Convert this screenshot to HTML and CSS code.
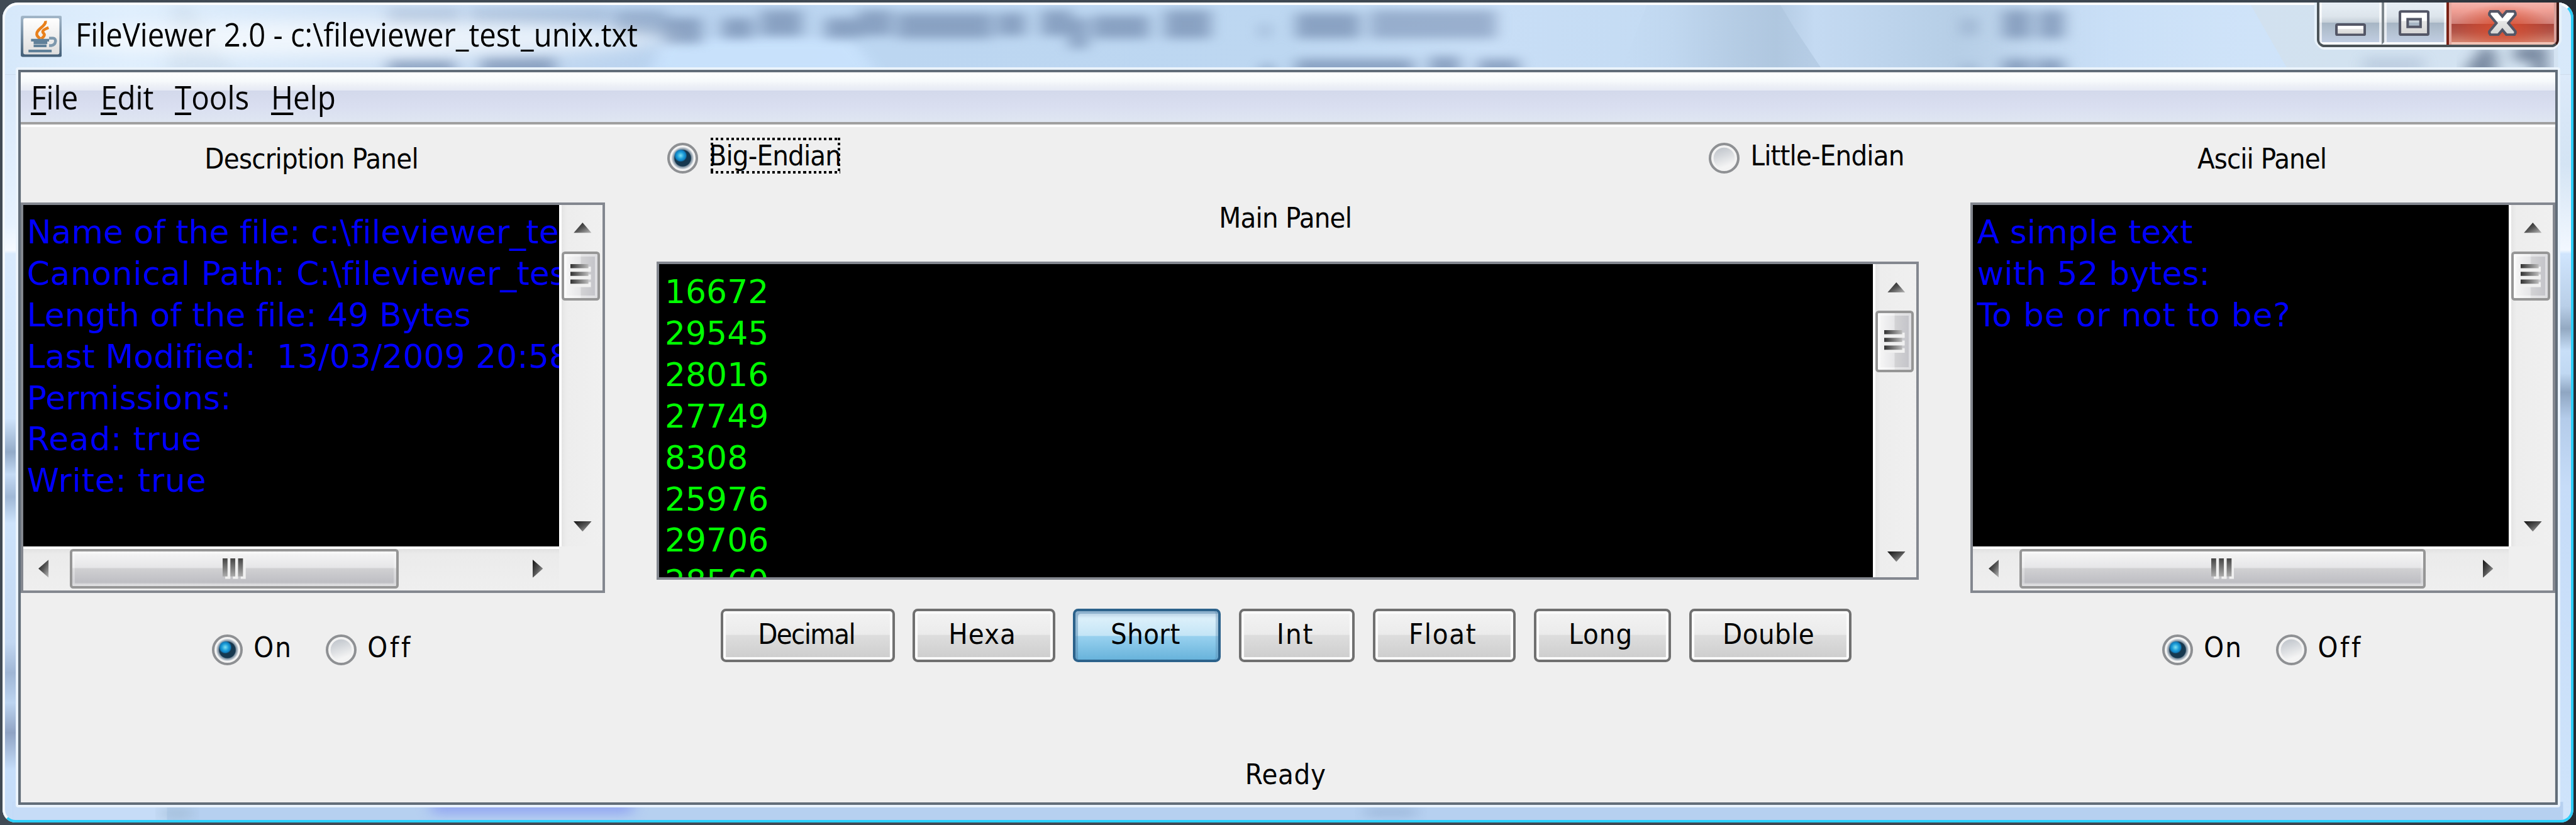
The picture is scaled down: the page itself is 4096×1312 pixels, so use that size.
FILE: index.html
```html
<!DOCTYPE html>
<html lang="en">
<head>
<meta charset="utf-8">
<title>FileViewer 2.0</title>
<link rel="stylesheet" href="styles.css">
</head>
<body>
<svg class="defs" width="0" height="0" aria-hidden="true">
  <defs>
    <linearGradient id="arrowFill" x1="0" y1="0" x2="1" y2="1"><stop offset="0" stop-color="#111"/><stop offset=".5" stop-color="#555"/><stop offset="1" stop-color="#bbb"/></linearGradient>
    <linearGradient id="gripH" x1="0" x2="1"><stop offset="0" stop-color="#333"/><stop offset="1" stop-color="#bbb"/></linearGradient>
    <linearGradient id="gripV" x1="0" y1="0" x2="0" y2="1"><stop offset="0" stop-color="#444"/><stop offset="1" stop-color="#aaa"/></linearGradient>
    <linearGradient id="glyphFill" x1="0" y1="0" x2="0" y2="1"><stop offset="0" stop-color="#fff"/><stop offset=".4" stop-color="#fff"/><stop offset=".42" stop-color="#e6e6e6"/><stop offset="1" stop-color="#d4d4d4"/></linearGradient>
    <symbol id="up" viewBox="0 0 7 4"><path d="M3.5 0 7 4H0z" fill="url(#arrowFill)"/></symbol>
    <symbol id="down" viewBox="0 0 7 4"><path d="M0 0h7L3.5 4z" fill="url(#arrowFill)"/></symbol>
    <symbol id="left" viewBox="0 0 4 7"><path d="M4 0v7L0 3.5z" fill="url(#arrowFill)"/></symbol>
    <symbol id="right" viewBox="0 0 4 7"><path d="M0 0v7l4-3.5z" fill="url(#arrowFill)"/></symbol>
    <symbol id="gripRows" viewBox="0 0 8 9"><path d="M0 1h8v2H0zM0 4h8v2H0zM0 7h8v2H0z" fill="#f0f0f0"/><path d="M0 0h7v1.600H0zM0 3h7v1.600H0zM0 6h7v1.600H0z" fill="url(#gripH)"/></symbol>
    <symbol id="gripCols" viewBox="0 0 9 8"><path d="M1 0h2v8H1zM4 0h2v8H4zM7 0h2v8H7z" fill="#f0f0f0"/><path d="M0 0h1.900v7H0zM3 0h1.900v7H3zM6 0h1.900v7H6z" fill="url(#gripV)"/></symbol>
  </defs>
</svg>

<div class="window">
  <svg class="glass" viewBox="0 0 1000 320" preserveAspectRatio="none" aria-hidden="true">
    <defs>
      <filter id="soft" x="-20%" y="-60%" width="140%" height="220%"><feGaussianBlur stdDeviation="2.8 1.8"/></filter>
      <filter id="wide" x="-20%" y="-60%" width="140%" height="220%"><feGaussianBlur stdDeviation="9 3"/></filter>
      <linearGradient id="sky" x1="0" x2="1">
        <stop offset="0" stop-color="#d6e8fa"/><stop offset=".05" stop-color="#e0effd"/><stop offset=".15" stop-color="#d0e2f6"/><stop offset=".25" stop-color="#b9d2ee"/><stop offset=".34" stop-color="#bcd6f1"/><stop offset=".5" stop-color="#bdd7f1"/><stop offset=".58" stop-color="#c8def6"/><stop offset=".65" stop-color="#c4dbf3"/><stop offset=".69" stop-color="#b4cbe3"/><stop offset=".705" stop-color="#c4daf2"/><stop offset=".76" stop-color="#b6cee6"/><stop offset=".82" stop-color="#c8def5"/><stop offset=".88" stop-color="#d4e5f5"/><stop offset="1" stop-color="#d8e9fa"/>
      </linearGradient>
      <linearGradient id="shade" x1="0" x2="1"><stop offset="0" stop-color="#a9c1da" stop-opacity="0"/><stop offset="1" stop-color="#a9c1da" stop-opacity=".55"/></linearGradient>
      <linearGradient id="fadeL" x1="0" x2="1"><stop offset="0" stop-color="#cce2fb" stop-opacity="0"/><stop offset="1" stop-color="#cce2fb" stop-opacity=".7"/></linearGradient>
      <linearGradient id="side" x1="0" y1="0" x2="0" y2="1">
        <stop offset="0" stop-color="#d8e8fa"/><stop offset=".2" stop-color="#e6f2fe"/><stop offset=".235" stop-color="#f6faff"/><stop offset=".24" stop-color="#d9eafd"/><stop offset=".46" stop-color="#cfe4fc"/><stop offset=".505" stop-color="#93abc8"/><stop offset=".535" stop-color="#c4daf4"/><stop offset=".565" stop-color="#a0b8d6"/><stop offset=".6" stop-color="#cde3fb"/><stop offset=".76" stop-color="#c2d7f1"/><stop offset=".8" stop-color="#9fb6d5"/><stop offset=".84" stop-color="#bcd4f0"/><stop offset=".88" stop-color="#8fa3c4"/><stop offset=".93" stop-color="#c6defa"/><stop offset="1" stop-color="#c6dcf7"/>
      </linearGradient>
      <linearGradient id="sideR" x1="0" y1="0" x2="0" y2="1">
        <stop offset="0" stop-color="#dceafa"/><stop offset=".12" stop-color="#d4e4f4"/><stop offset=".235" stop-color="#f2f8ff"/><stop offset=".24" stop-color="#d0e5fd"/><stop offset=".31" stop-color="#b9cfe8"/><stop offset=".34" stop-color="#93a9c2"/><stop offset=".37" stop-color="#c8dff8"/><stop offset=".4" stop-color="#c0d8f2"/><stop offset=".425" stop-color="#8fa6c2"/><stop offset=".46" stop-color="#b4ccea"/><stop offset=".55" stop-color="#c6dcf8"/><stop offset="1" stop-color="#cfe4fb"/>
      </linearGradient>
    </defs>
    <rect width="1000" height="28" fill="url(#sky)"/>
    <path d="M258 14h72l11 14h-90z" fill="#cbe4fe" opacity=".85" filter="url(#soft)"/>
    <path d="M640 0h51l6 10 12 18h-80z" fill="url(#shade)"/>
    <path d="M770 28h120L874 0h-104z" fill="url(#fadeL)"/>
    <path d="M874 0l16 28h104V0z" fill="#cfdeea" opacity=".5"/>
    <path d="M66 1h7l18 27H64z" fill="#c2d2e2" opacity=".35" filter="url(#soft)"/>
    <g fill="#7087ab" opacity=".66" filter="url(#soft)">
      <rect x="150" y="2" width="28" height="7" opacity=".4"/><rect x="182" y="2" width="54" height="7" opacity=".4"/><rect x="238" y="3" width="20" height="10" opacity=".7"/>
      <rect x="257" y="6" width="15" height="10"/><rect x="280" y="6" width="12" height="8"/><rect x="295" y="3" width="16" height="10"/><rect x="320" y="6" width="14" height="8"/><rect x="333" y="3" width="13" height="10"/><rect x="348" y="4" width="37" height="10"/><rect x="387" y="4" width="11" height="9"/>
      <rect x="404" y="3" width="12" height="10"/><rect x="415" y="6" width="7" height="12"/><rect x="424" y="5" width="22" height="9"/><rect x="452" y="3" width="18" height="11"/><rect x="489" y="8" width="4" height="6" opacity=".5"/>
      <rect x="503" y="4" width="25" height="10"/><rect x="532" y="3" width="49" height="11" opacity=".8"/>
      <rect x="150" y="22" width="26" height="9"/><rect x="186" y="21" width="29" height="10"/><rect x="490" y="24" width="4" height="6"/><rect x="503" y="22" width="46" height="9"/><rect x="555" y="21" width="12" height="10"/><rect x="574" y="22" width="16" height="9"/>
      <rect x="762" y="6" width="6" height="7" opacity=".5"/><rect x="778" y="3" width="11" height="11"/><rect x="792" y="3" width="10" height="11"/><rect x="778" y="22" width="11" height="9"/><rect x="791" y="22" width="11" height="9"/><rect x="762" y="24" width="6" height="5" opacity=".5"/>
      <rect x="918" y="21" width="24" height="8" opacity=".3"/>
    </g>
    <g fill="none" stroke="#5d6e88" stroke-width="6" opacity=".75" filter="url(#soft)"><path d="M968 18l-8 10M967 20v9"/><path d="M977 20h10v9"/></g>
    <ellipse cx="140" cy="14" rx="118" ry="7" fill="#fff" opacity=".6" filter="url(#wide)"/>
    <rect y="28" width="8" height="292" fill="url(#side)"/>
    <rect x="992" y="28" width="8" height="292" fill="url(#sideR)"/>
    <rect x="4" y="312" width="992" height="8" fill="#b6d0f0"/>
    <rect x="4" y="312" width="60" height="8" fill="#c6dcf7"/>
    <rect x="167" y="310" width="78" height="7" fill="#8d9ff2" opacity=".75" filter="url(#soft)"/>
    <rect x="62" y="314" width="12" height="5" fill="#9fb9d2" opacity=".6" filter="url(#soft)"/>
    <rect x="530" y="314" width="20" height="4" fill="#93aed2" opacity=".6" filter="url(#soft)"/>
  </svg>

  <header class="titlebar">
    <svg class="java" viewBox="0 0 16 16">
      <defs><linearGradient id="jb" x1="0" y1="0" x2="0" y2="1"><stop offset="0" stop-color="#a3b7c9"/><stop offset="1" stop-color="#435f78"/></linearGradient><linearGradient id="jf" x1="0" y1="0" x2="0" y2="1"><stop offset="0" stop-color="#fff"/><stop offset="1" stop-color="#dedede"/></linearGradient></defs>
      <rect width="16" height="16" rx=".8" fill="url(#jb)"/><rect x="1" y="1" width="14" height="14" rx=".6" fill="url(#jf)"/>
      <path d="M9.6 2C10 4 6 5.2 6.2 7.2 6.3 8.2 7.2 8.6 7.6 9M10.8 4.6C8.600 5.500 8 6 9 7 9.600 7.600 8.600 8.400 8 9" fill="none" stroke="#e8801c" stroke-width="1.1"/>
      <path d="M4 9h7v1H4zM5 10h5.300v1H5zM5 11.200h5v1H5zM3 13.200h9v1H3z" fill="#5f8099"/>
      <path d="M11 8.700h1.600c1.300 0 1.300 2.600-.8 2.900h-.8" fill="none" stroke="#7d98ad" stroke-width="1.100"/>
    </svg>
    <h1 class="caption">FileViewer 2.0 - c:\fileviewer_test_unix.txt</h1>
    <div class="controls">
      <button class="ctl" aria-label="Minimize"><svg class="g-min" viewBox="0 0 12 5"><rect x=".5" y=".5" width="11" height="4" rx=".5" fill="url(#glyphFill)" stroke="#535666"/></svg></button>
      <button class="ctl ctl-max" aria-label="Maximize"><svg class="g-max" viewBox="0 0 12 10"><path fill-rule="evenodd" d="M1 .5h10q.5 0 .5.5v8q0 .5-.5.5H1Q.5 9.500.5 9V1Q.5.5 1 .5zM3.500 3.500v3h5v-3z" fill="url(#glyphFill)" stroke="#535666"/></svg></button>
      <button class="ctl ctl-close" aria-label="Close"><svg class="g-x" viewBox="0 0 11 10"><path d="M.5 1.200.9.5h3l1.600 1.900L7.100.5h3l.4.7v.6L7.800 5l2.700 3.200v.6l-.4.7h-3L5.500 7.600 3.900 9.500h-3l-.4-.7v-.6L3.200 5 .5 1.800z" fill="url(#glyphFill)" stroke="#535666"/></svg></button>
    </div>
  </header>

  <main class="client">
    <nav class="menubar">
      <span class="menu m-file"><u>F</u>ile</span><span class="menu m-edit"><u>E</u>dit</span><span class="menu m-tools"><u>T</u>ools</span><span class="menu m-help"><u>H</u>elp</span>
    </nav>
    <div class="content">
      <section class="column side">
        <h2 class="label desc-label">Description Panel</h2>
        <div class="scroll scroll-both">
          <pre class="text info">Name of the file: c:\fileviewer_test_unix.txt
<span class="ls-path">Canonical Path: C</span>:\fileviewer_test_unix.txt
Length of the file: 49 Bytes
Last Modified:  13/03/2009 20:58:12
Permissions:
<span class="ls-rw">Read: true</span>
<span class="ls-rw">Write: true</span></pre>
          <div class="vbar"><svg class="av"><use href="#up"/></svg><div class="thumb vthumb"><svg class="gr"><use href="#gripRows"/></svg></div><svg class="av end"><use href="#down"/></svg></div>
          <div class="hbar"><svg class="ah"><use href="#left"/></svg><div class="thumb hthumb ht-left"><svg class="gc"><use href="#gripCols"/></svg></div><svg class="ah end"><use href="#right"/></svg></div>
        </div>
        <div class="onoff onoff-left">
          <label class="radio"><i class="dot on"></i><span class="ls-on">On</span></label><label class="radio"><i class="dot"></i><span class="ls-off">Off</span></label>
        </div>
      </section>

      <section class="column center">
        <div class="endian">
          <label class="radio"><i class="dot on"></i><span class="focus">Big-Endian</span></label>
          <label class="radio little"><i class="dot"></i><span>Little-Endian</span></label>
        </div>
        <h2 class="label main-label">Main Panel</h2>
        <div class="scroll scroll-main">
          <pre class="text nums">16672
29545
28016
27749
8308
25976
29706
28560</pre>
          <div class="vbar"><svg class="av"><use href="#up"/></svg><div class="thumb vthumb vt-main"><svg class="gr"><use href="#gripRows"/></svg></div><svg class="av end"><use href="#down"/></svg></div>
        </div>
        <div class="formats">
          <button class="btn b-dec">Decimal</button><button class="btn b-hex">Hexa</button><button class="btn b-short">Short</button><button class="btn b-int">Int</button><button class="btn b-float">Float</button><button class="btn b-long">Long</button><button class="btn b-double">Double</button>
        </div>
        <p class="status">Ready</p>
      </section>

      <section class="column side">
        <h2 class="label ascii-label">Ascii Panel</h2>
        <div class="scroll scroll-both">
          <pre class="text ascii">A simple text
with 52 bytes:
<span class="ls-rw">To be or not to be?</span></pre>
          <div class="vbar"><svg class="av"><use href="#up"/></svg><div class="thumb vthumb"><svg class="gr"><use href="#gripRows"/></svg></div><svg class="av end"><use href="#down"/></svg></div>
          <div class="hbar"><svg class="ah"><use href="#left"/></svg><div class="thumb hthumb ht-right"><svg class="gc"><use href="#gripCols"/></svg></div><svg class="ah end"><use href="#right"/></svg></div>
        </div>
        <div class="onoff onoff-right">
          <label class="radio"><i class="dot on"></i><span class="ls-on">On</span></label><label class="radio"><i class="dot"></i><span class="ls-off">Off</span></label>
        </div>
      </section>
    </div>
  </main>
</div>
</body>
</html>
```
FILE: styles.css
```css
/* 1rem is one pixel of the 1000-wide design */
html { font-size: 0.1vw; }
*, *::before, *::after { box-sizing: border-box; }
body { margin: 0; height: 100vh; overflow: hidden; background: linear-gradient(90deg, #414b55, #3c4650 90%, #252b33); font-family: "DejaVu Sans Condensed", "DejaVu Sans", sans-serif; color: #000; }
h1, h2, p, pre { margin: 0; font-weight: normal; }
button { font: inherit; color: inherit; padding: 0; border: 0; background: none; }
.defs { position: absolute; }

.window { position: relative; height: 100vh; padding: 1rem; display: flex; flex-direction: column; overflow: hidden; }
.glass { position: absolute; inset: 1rem; width: calc(100% - 2rem); height: calc(100% - 2rem); border-radius: 6rem 6rem 5rem 5rem; }
.window::after { content: ""; position: absolute; inset: 1rem; border: 1rem solid #f3f8fd; border-top-color: #fbfdfe; border-right-color: #2ccdf8; border-bottom-color: #2cd0fc; border-radius: 6rem 6rem 5rem 5rem; pointer-events: none; }

.titlebar { position: relative; height: 25.200rem; flex: none; display: flex; align-items: flex-start; padding-left: 7rem; }
.java { width: 16rem; height: 16rem; margin-top: 5.100rem; flex: none; }
.caption { font-family: "Open Sans", "Noto Sans", sans-serif; font-size: 12.5rem; line-height: 16rem; margin: 4.300rem 0 0 5.200rem; white-space: pre; transform: scaleX(.922); transform-origin: 0 0; }
.controls { position: absolute; z-index: 2; right: 5.700rem; top: 0; display: flex; height: 17.400rem; border: 1rem solid #4c5459; border-top: 0; border-right-color: #3c1613; border-bottom-color: #4a5256; border-radius: 0 0 3rem 3rem; box-shadow: 0 1rem 0 #eef5fb, -1rem 0 0 #e6f1fa, 1rem 0 0 #e6f1fa; overflow: hidden; }
.ctl { width: 24.200rem; display: flex; align-items: flex-end; justify-content: center; padding-bottom: 2.500rem; background: linear-gradient(#e8eff6 0, #dde5ec 35%, #c6d0d9 50%, #a6b5c4 51%, #b4c2d2 75%, #c0cde2 100%); border: 1rem solid rgba(255,255,255,.65); border-top: 0; }
.ctl-max { width: 25.200rem; border-left: 1rem solid #7d868c; box-shadow: inset 1rem 0 0 rgba(255,255,255,.65); }
.ctl-close { width: 42.600rem; border: 0; border-left: 1rem solid #7a2115; border-bottom: 1rem solid #4e1f19; margin-bottom: -1rem; padding-bottom: 3.500rem; box-shadow: inset 1rem 0 0 #e4a9a0, inset -1rem 0 0 #d8a19b, inset 0 -1rem 0 #f0c3b5; background: radial-gradient(ellipse 19rem 9rem at 50% 58%, rgba(222,76,44,.9), rgba(222,76,44,0)), linear-gradient(#f4b5ae 0, #ef9f95 20%, #d08078 50%, #a9443a 51%, #b4564a 70%, #dc8e78 100%); }
.g-min { width: 12rem; height: 5rem; }
.g-max { width: 12rem; height: 10.1rem; }
.g-x { width: 11.2rem; height: 10.1rem; }

.client { position: relative; z-index: 1; flex: 1; margin: 0 5rem 5.900rem; border: 1rem solid #eaf3fc; border-radius: 1rem; background: #efefef; padding: 1rem; box-shadow: inset 0 0 0 1rem #626d79; display: flex; flex-direction: column; }
.menubar { height: 20.100rem; flex: none; display: flex; padding: 3.400rem 0 0 4rem; font-family: "Open Sans", "Noto Sans", sans-serif; font-size: 12.5rem; line-height: 12rem; background: linear-gradient(#fff 0, #f6f9fb 3.500rem, #eef1f7 5rem, #e5e9f4 7.2rem, #d3d9eb 7.2rem, #d9def0 13rem, #dfe6f2 19.2rem); border-bottom: 1rem solid #a0a0a0; }
.menu { transform: scaleX(.93); transform-origin: 0 0; padding-top: .2rem; }
.menu u { text-decoration: none; background: linear-gradient(#000, #000) 0 14.500rem / 100% 1rem no-repeat; }
.m-file { width: 27rem; } .m-edit { width: 29rem; } .m-tools { width: 37.3rem; }

.content { flex: 1; border-top: 1rem solid #fff; display: grid; grid-template-columns: 227rem 490rem 227rem; column-gap: 20rem; }
.column { display: flex; flex-direction: column; min-width: 0; }
.label { font-size: 11rem; line-height: 12rem; letter-spacing: -.19rem; text-align: center; white-space: nowrap; }
.side .label { margin: 6.500rem 0 10.900rem; }
.desc-label { padding-right: 1.200rem; }
.ascii-label { letter-spacing: -.24rem; padding-right: .8rem; }
.main-label { margin: 11.400rem 0 11rem; padding-right: 2rem; }

.scroll { display: grid; border: 1rem solid #83878f; background: #efefef; overflow: hidden; }
.scroll-both { height: 151.600rem; grid-template: 132.600rem 1fr / 208rem 1fr; }
.scroll-main { height: 123.400rem; grid-template: 1fr / 471rem 1fr; }
.text { background: #000; overflow: hidden; font-family: "DejaVu Sans", sans-serif; font-size: 12.700rem; line-height: 16.080rem; font-variant-ligatures: none; color: #00f; padding: 2.700rem 0 0 1.400rem; min-height: 0; }
.nums { color: #0f0; padding: 2.900rem 0 0 2.100rem; }
.ascii { padding-left: 1.500rem; }
.ls-path { letter-spacing: .13rem; }
.ls-rw { letter-spacing: .17rem; }

.vbar { display: flex; flex-direction: column; align-items: center; border-left: 1rem solid #fff; background: linear-gradient(90deg, #e4e4e4 0, #ededed 2rem, #f0f0f0 100%); padding: 6.900rem 1.800rem 5.900rem 0; min-height: 0; }
.av { width: 7rem; height: 4rem; flex: none; margin-left: 1.600rem; }
.end { margin-top: auto; }
.thumb { display: flex; align-items: center; justify-content: center; border: 1rem solid #969696; border-radius: 1.300rem; flex: none; }
.vthumb { width: 15rem; height: 19rem; margin-top: 7.100rem; background: linear-gradient(90deg, #f8f8f8 0, #e6e6e8 48%, #d2d2d4 52%, #c2c2c8 100%); box-shadow: inset 0 0 0 1rem rgba(255,255,255,.45); }
.vt-main { height: 23.900rem; }
.gr { width: 8rem; height: 9rem; }
.hbar { grid-column: 1; display: flex; align-items: center; border-top: 1rem solid #fff; background: linear-gradient(#e2e2e2 0, #ebebeb 2rem, #efefef 100%); padding: 0 6.100rem 1.200rem 6rem; }
.ah { width: 4rem; height: 7rem; flex: none; }
.hbar .end { margin: 0 0 0 auto; }
.hthumb { height: 15.200rem; margin-left: 8.100rem; background: linear-gradient(#f6f6f6 0, #e6e6e8 46%, #d0d0d2 50%, #bfbfc4 88%, #d4d4d6 100%); box-shadow: inset 0 0 0 1rem rgba(255,255,255,.3); }
.ht-left { width: 127.700rem; }
.ht-right { width: 157.500rem; }
.gc { width: 9rem; height: 8rem; }

.radio { display: flex; align-items: flex-start; font-size: 11rem; line-height: 12rem; white-space: nowrap; }
.dot { width: 12rem; height: 12rem; flex: none; border-radius: 50%; border: 1rem solid #8e9093; background: radial-gradient(circle at 50% 50%, transparent 4rem, #f3f3f3 4.200rem), linear-gradient(160deg, #b4bac2, #d5d8dc 40%, #f4f4f4 75%); }
.dot.on { background: radial-gradient(circle at 42% 40%, #7fe0f2 0, #1f9fd8 1.300rem, #0f7fc0 2rem, transparent 2.500rem), radial-gradient(circle at 50% 50%, #16384f 3.100rem, #7d8f9e 3.400rem, #b9c3cc 4rem, #f3f3f3 4.400rem); }
.endian { display: flex; height: 18rem; padding: 6.200rem 0 0 4rem; letter-spacing: -.21rem; }
.endian .radio { width: 404.300rem; }
.endian .radio span { margin: -1rem 0 0 4.300rem; height: 12rem; }
.endian .radio .focus { position: relative; }
.focus::after { content: ""; position: absolute; left: .5rem; top: -1rem; width: 50.400rem; height: 14rem; background: repeating-linear-gradient(90deg, #000 0 1rem, transparent 1rem 2rem) 0 0 / 100% 1rem no-repeat, repeating-linear-gradient(90deg, #000 0 1rem, transparent 1rem 2rem) 0 100% / 100% 1rem no-repeat, repeating-linear-gradient(#000 0 1rem, transparent 1rem 2rem) 0 0 / 1rem 100% no-repeat, repeating-linear-gradient(#000 0 1rem, transparent 1rem 2rem) 100% 0 / 1rem 100% no-repeat; }
.endian .little { width: auto; }

.onoff { display: flex; margin-top: 16.100rem; }
.onoff .radio { width: 44.200rem; }
.onoff .radio span { margin: -1.100rem 0 0 4.200rem; }
.onoff-left { padding-left: 74.300rem; }
.onoff-right { padding-left: 74.400rem; }
.ls-on { letter-spacing: .5rem; }
.ls-off { letter-spacing: .900rem; }

.formats { display: flex; justify-content: center; gap: 7rem; margin: 11.200rem 0 0 -1.400rem; }
.btn { height: 20.900rem; padding: 0 1.200rem .7rem 0; font-size: 11rem; line-height: 12rem; border: 1rem solid #707070; border-radius: 2rem; box-shadow: inset 0 0 0 1rem #fbfbfb; background: linear-gradient(#f3f3f3 0, #ebebeb 48%, #dddddd 50%, #cdcdcd 100%); }
.b-dec { width: 67.500rem; letter-spacing: -.4rem; }
.b-hex { width: 55.200rem; letter-spacing: .25rem; }
.b-short { width: 57.400rem; letter-spacing: .09rem; border-color: #2c628b; box-shadow: inset 1rem 1rem 0 rgba(80,130,170,.45), inset -1rem 0 0 rgba(80,130,170,.3), inset 0 2rem 1rem rgba(160,190,215,.5); background: linear-gradient(#e5f4fc 0, #c4e5f6 50%, #98d1ef 52%, #68b3db 100%); }
.b-int { width: 45rem; letter-spacing: .5rem; }
.b-float { width: 55.400rem; letter-spacing: .4rem; }
.b-long { width: 53.300rem; letter-spacing: .25rem; }
.b-double { width: 63rem; letter-spacing: .1rem; }
.status { font-size: 11rem; line-height: 12rem; letter-spacing: .16rem; text-align: center; padding-right: 1.800rem; margin-top: 37.500rem; }
```
